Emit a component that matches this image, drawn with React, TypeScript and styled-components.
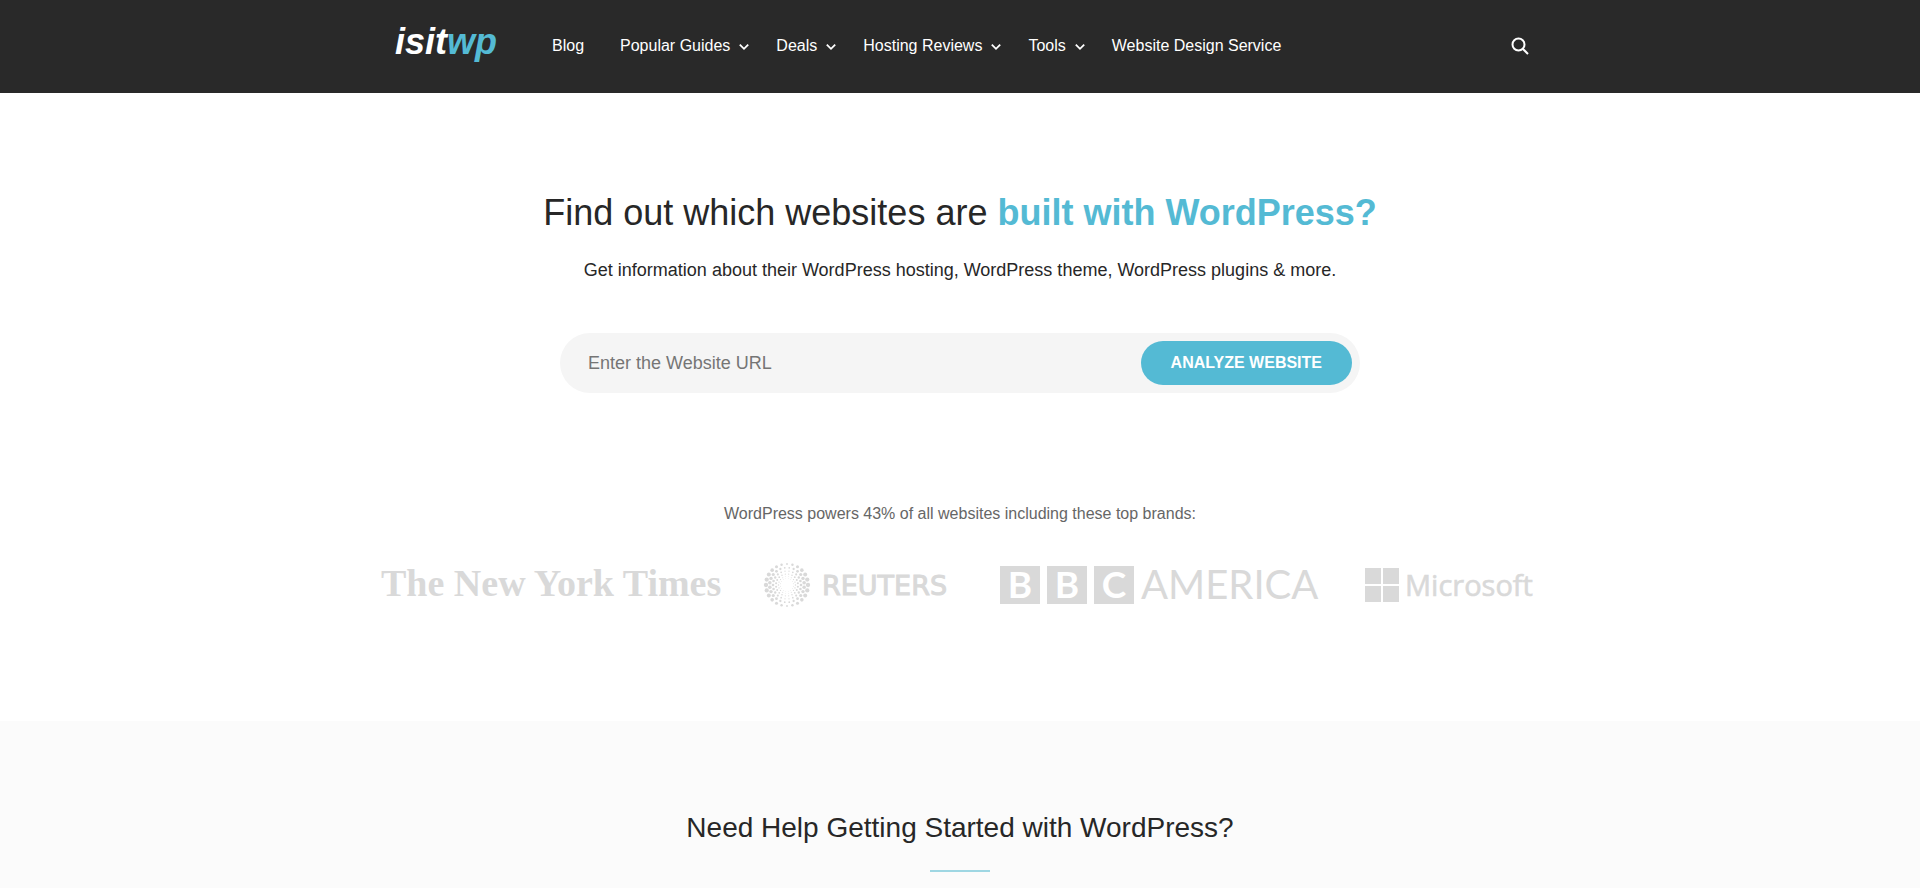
import React from "react";
import styled, { createGlobalStyle } from "styled-components";

const GlobalStyle = createGlobalStyle`
  *, *::before, *::after { box-sizing: border-box; }
  body {
    margin: 0;
    background: #fff;
    color: #272727;
    font-family: "Liberation Sans", Arial, sans-serif;
    font-size: 16px;
    line-height: 24px;
  }
`;

const Header = styled.header`
  background: #292929;
  padding: 19px 24px 21px;
`;

const HeaderInner = styled.div`
  display: flex;
  align-items: center;
  max-width: 1140px;
  min-height: 53px;
  margin: 0 auto;
  padding: 0 1px 0 5px;
`;

const Logo = styled.a`
  margin-right: 55px;
  padding-bottom: 8px;
  color: #fff;
  font-size: 36px;
  font-style: italic;
  font-weight: 700;
  line-height: 40px;
  text-decoration: none;

  span { color: #54bad4; }
`;

const Nav = styled.nav`
  display: flex;
  flex: 1;
  flex-wrap: wrap;
  gap: 0 36px;
`;

const NavLink = styled.a<{ $menu?: boolean }>`
  display: inline-flex;
  align-items: center;
  gap: 8px;
  margin-right: ${(p) => (p.$menu ? "-10px" : "0")};
  color: #fff;
  text-decoration: none;
`;

const SearchButton = styled.button`
  display: flex;
  padding: 0;
  border: 0;
  background: none;
  color: #fff;
  cursor: pointer;
`;

const Hero = styled.main`
  padding: 96px 24px 110px;
  text-align: center;
`;

const Title = styled.h1`
  margin: 0 0 20px;
  font-size: 36px;
  font-weight: 400;
  line-height: 48px;

  strong { color: #54bad4; }
`;

const Lead = styled.p`
  margin: 0 0 50px;
  font-size: 18px;
  line-height: 26px;
`;

const SearchForm = styled.form`
  display: flex;
  align-items: center;
  max-width: 800px;
  margin: 0 auto 109px;
  padding: 8px 8px 8px 28px;
  border-radius: 32px;
  background: #f5f5f5;
`;

const UrlInput = styled.input`
  flex: 1;
  min-width: 0;
  padding: 0;
  border: 0;
  outline: 0;
  background: none;
  color: #272727;
  font-family: inherit;
  font-size: 18px;
  line-height: 28px;

  &::placeholder { color: #757575; opacity: 1; }
`;

const SubmitButton = styled.button`
  padding: 10px 30px;
  border: 0;
  border-radius: 22px;
  background: #54bad4;
  color: #fff;
  font-family: inherit;
  font-size: 16px;
  font-weight: 700;
  line-height: 24px;
  cursor: pointer;
`;

const BrandsNote = styled.p`
  margin: 0 0 33px;
  color: #666;
`;

const Brands = styled.ul`
  display: flex;
  flex-wrap: wrap;
  align-items: center;
  justify-content: center;
  gap: 24px 42px;
  margin: 0;
  padding: 0 4px 0 0;
  list-style: none;
`;

const Brand = styled.li`
  flex: none;

  svg {
    display: block;
    overflow: visible;
    fill: #d9d9d9;
  }
`;

const Help = styled.section`
  padding: 89px 24px 88px;
  background: #fbfbfb;
  text-align: center;
`;

const HelpTitle = styled.h2`
  margin: 0;
  font-size: 28px;
  font-weight: 400;
  line-height: 36px;

  &::after {
    content: "";
    display: block;
    width: 60px;
    height: 2px;
    margin: 24px auto 0;
    background: #9fd7e3;
  }
`;

const navItems = [
  { label: "Blog" },
  { label: "Popular Guides", menu: true },
  { label: "Deals", menu: true },
  { label: "Hosting Reviews", menu: true },
  { label: "Tools", menu: true },
  { label: "Website Design Service" },
];

const Chevron = () => (
  <svg width="12" height="12" viewBox="0 0 12 12" fill="none" stroke="currentColor" strokeWidth="1.8" aria-hidden="true">
    <path d="M1.8 4.6 6 8.8l4.2-4.2" />
  </svg>
);

const TimesLogo = () => (
  <svg width="342" height="52" viewBox="0 0 342 52" role="img" aria-label="The New York Times">
    <text x="1" y="37" fontFamily="Liberation Serif, serif" fontWeight="700" fontSize="38">The New York Times</text>
  </svg>
);

const rings = [
  { r: 21, n: 24, dot: 1.8 },
  { r: 17.3, n: 24, dot: 1.5 },
  { r: 14, n: 22, dot: 1.1 },
  { r: 11, n: 20, dot: 0.9 },
  { r: 8.5, n: 18, dot: 0.6 },
  { r: 6.5, n: 16, dot: 0.4 },
];

const ReutersLogo = () => (
  <svg width="194" height="46" viewBox="0 0 194 46" role="img" aria-label="Reuters">
    {rings.map(({ r, n, dot }, ring) =>
      Array.from({ length: n }, (_, i) => {
        const a = ((i + ring * 0.5) / n) * Math.PI * 2;
        const weight = 0.5 + 0.7 * Math.abs(Math.cos(a));
        return <circle key={`${ring}-${i}`} cx={23 + r * Math.cos(a)} cy={23 + r * Math.sin(a)} r={dot * weight} />;
      })
    )}
    <text x="58" y="33" fontFamily="DejaVu Sans, sans-serif" fontSize="27" stroke="#d9d9d9" strokeWidth="1">REUTERS</text>
  </svg>
);

const BbcLogo = () => (
  <svg width="323" height="38" viewBox="0 0 323 38" role="img" aria-label="BBC America">
    {["B", "B", "C"].map((letter, i) => (
      <g key={i}>
        <rect x={i * 47} width="40" height="38" />
        <text x={i * 47 + 20} y="32" textAnchor="middle" fontFamily="Lato, sans-serif" fontWeight="700" fontSize="37" fill="#fff">{letter}</text>
      </g>
    ))}
    <text x="141" y="33" fontFamily="Lato, sans-serif" fontSize="40">AMERICA</text>
  </svg>
);

const MicrosoftLogo = () => (
  <svg width="171" height="36" viewBox="0 0 171 36" role="img" aria-label="Microsoft">
    <path d="M0 1h16v16H0zM18 1h16v16H18zM0 19h16v16H0zM18 19h16v16H18z" />
    <text x="40" y="29" fontFamily="Open Sans, sans-serif" fontSize="29" stroke="#d9d9d9" strokeWidth="0.6">Microsoft</text>
  </svg>
);

export default function App() {
  return (
    <>
      <GlobalStyle />
      <Header>
        <HeaderInner>
          <Logo href="#">isit<span>wp</span></Logo>
          <Nav aria-label="Main">
            {navItems.map(({ label, menu }) => (
              <NavLink key={label} href="#" $menu={menu}>
                {label}
                {menu && <Chevron />}
              </NavLink>
            ))}
          </Nav>
          <SearchButton type="button" aria-label="Search">
            <svg width="18" height="18" viewBox="0 0 18 18" fill="none" stroke="currentColor" strokeWidth="2" aria-hidden="true">
              <circle cx="7.5" cy="7.5" r="6" />
              <path d="m12 12 5 5" />
            </svg>
          </SearchButton>
        </HeaderInner>
      </Header>
      <Hero>
        <Title>Find out which websites are <strong>built with WordPress?</strong></Title>
        <Lead>Get information about their WordPress hosting, WordPress theme, WordPress plugins &amp; more.</Lead>
        <SearchForm onSubmit={(e) => e.preventDefault()}>
          <UrlInput type="text" aria-label="Website URL" placeholder="Enter the Website URL" />
          <SubmitButton type="submit">ANALYZE WEBSITE</SubmitButton>
        </SearchForm>
        <BrandsNote>WordPress powers 43% of all websites including these top brands:</BrandsNote>
        <Brands>
          <Brand><TimesLogo /></Brand>
          <Brand><ReutersLogo /></Brand>
          <Brand><BbcLogo /></Brand>
          <Brand><MicrosoftLogo /></Brand>
        </Brands>
      </Hero>
      <Help>
        <HelpTitle>Need Help Getting Started with WordPress?</HelpTitle>
      </Help>
    </>
  );
}
